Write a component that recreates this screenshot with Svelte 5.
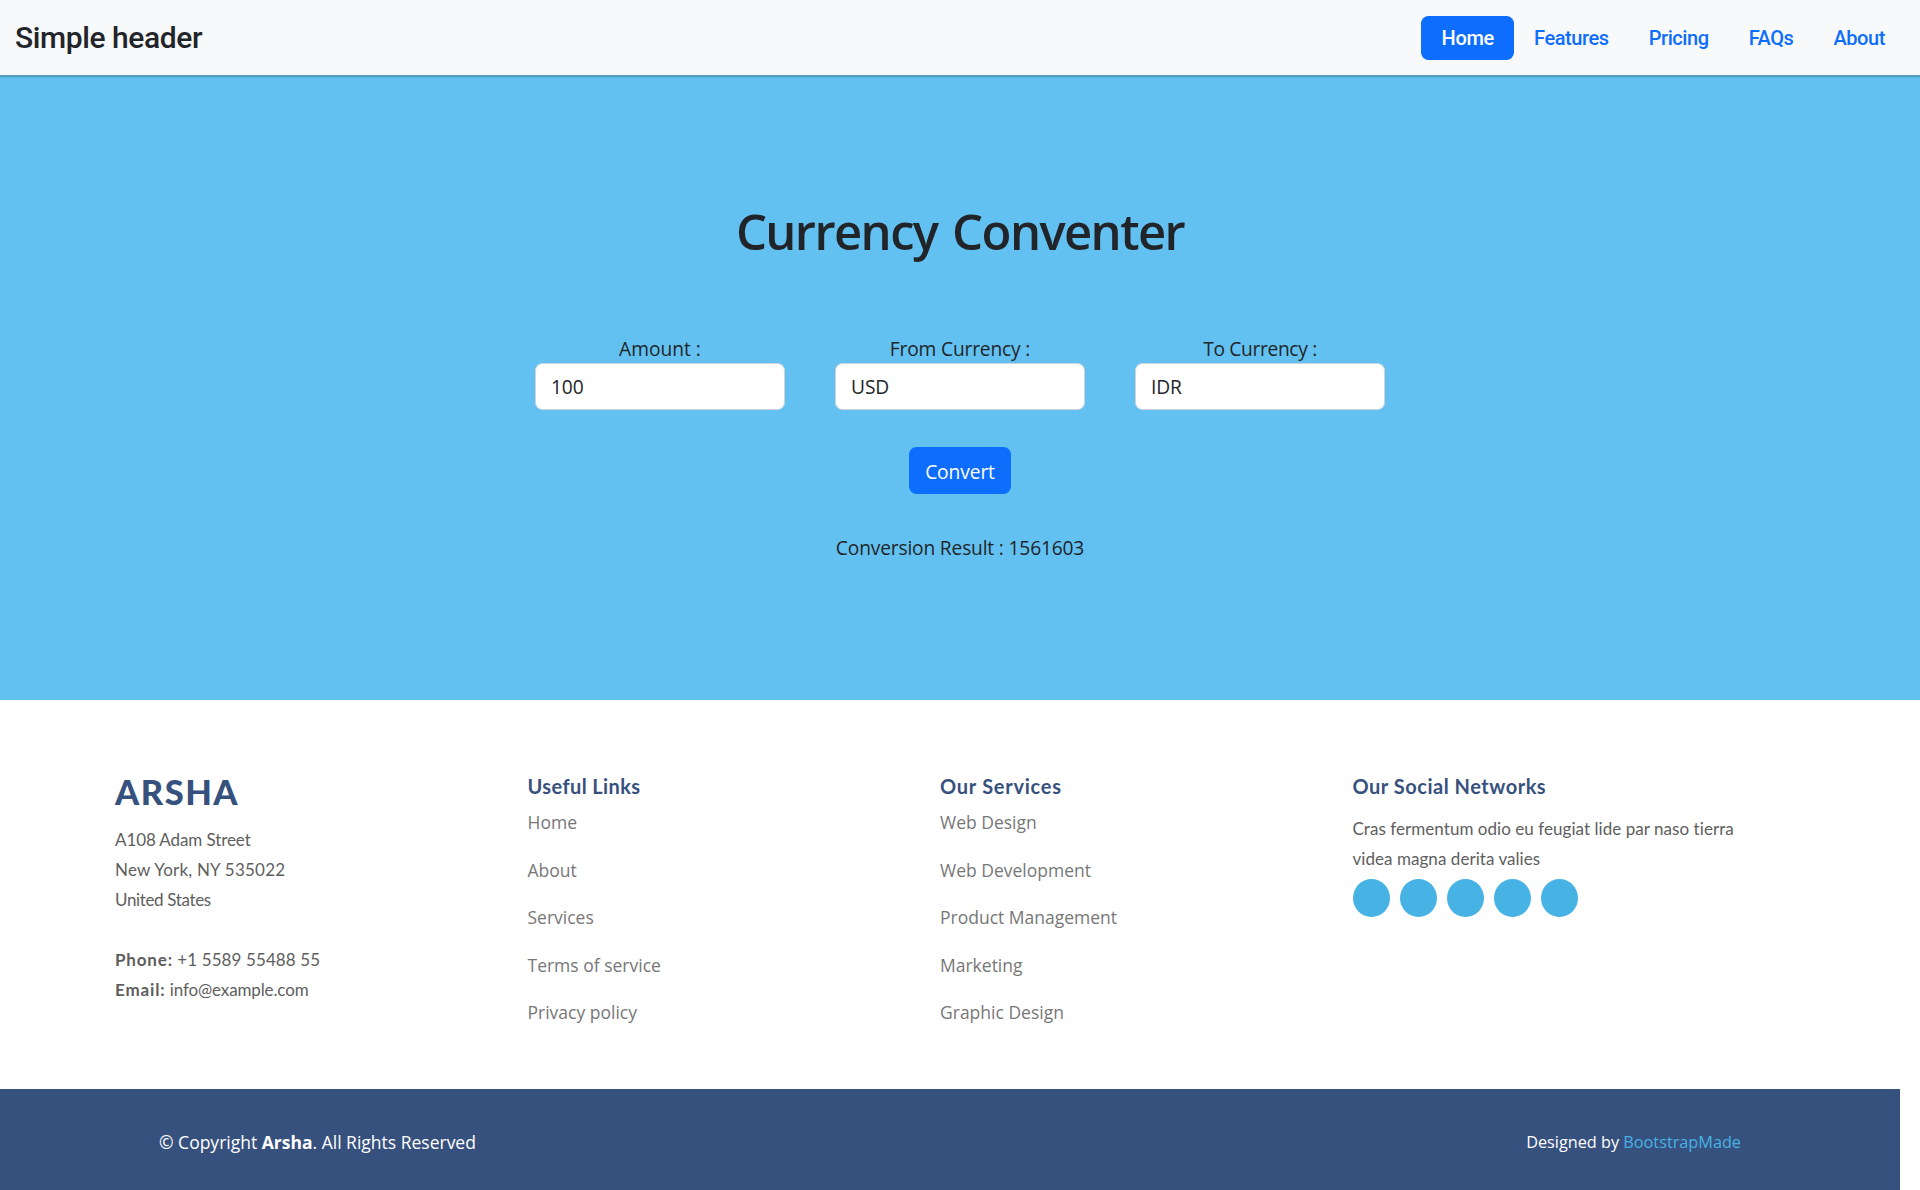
<script>
  const nav = ['Home', 'Features', 'Pricing', 'FAQs', 'About'];
  const usefulLinks = ['Home', 'About', 'Services', 'Terms of service', 'Privacy policy'];
  const services = ['Web Design', 'Web Development', 'Product Management', 'Marketing', 'Graphic Design'];
  const socials = ['Twitter', 'Facebook', 'Instagram', 'Skype', 'LinkedIn'];

  let amount = $state('100');
  let from = $state('USD');
  let to = $state('IDR');
  let result = $state('1561603');
</script>

<header class="topbar">
  <span class="brand">Simple header</span>
  <nav>
    {#each nav as item, i}
      <a href="#top" class:active={i === 0}>{item}</a>
    {/each}
  </nav>
</header>

<main class="hero">
  <h1>Currency Conventer</h1>
  <div class="fields">
    <label><span class="amount">Amount :</span><input bind:value={amount} /></label>
    <label><span>From Currency :</span><input bind:value={from} /></label>
    <label><span class="to">To Currency :</span><input bind:value={to} /></label>
  </div>
  <button type="button">Convert</button>
  <p class="result">Conversion Result : {result}</p>
</main>

<footer>
  <div class="columns">
    <section>
      <h3>ARSHA</h3>
      <address>
        <div class="street">A108 Adam Street</div>
        <div class="city">New York, NY 535022</div>
        <div class="country">United States</div>
        <br />
        <div><strong>Phone:</strong> <span class="phone">+1 5589 55488 55</span></div>
        <div><strong>Email:</strong> <span class="mail">info@example.com</span></div>
      </address>
    </section>
    <section>
      <h4 class="useful">Useful Links</h4>
      <ul>
        {#each usefulLinks as link}<li><a href="#top">{link}</a></li>{/each}
      </ul>
    </section>
    <section>
      <h4 class="services">Our Services</h4>
      <ul>
        {#each services as link}<li><a href="#top">{link}</a></li>{/each}
      </ul>
    </section>
    <section>
      <h4>Our Social Networks</h4>
      <p class="about">Cras fermentum odio eu feugiat lide par naso tierra<br />videa magna derita valies</p>
      <div class="socials">
        {#each socials as name}<a href="#top" aria-label={name}></a>{/each}
      </div>
    </section>
  </div>
  <div class="bottom">
    <div class="copyright">© Copyright <strong>Arsha</strong>. All Rights Reserved</div>
    <div class="credits">Designed by <a href="#top">BootstrapMade</a></div>
  </div>
</footer>

<style>
  :global(body) {
    margin: 0;
    background: #fff;
    color: #212529;
    font-family: 'Open Sans', sans-serif;
    overflow: hidden;
  }
  h1, h3, h4, p, ul { margin: 0; padding: 0; }
  a { text-decoration: none; }
  .topbar {
    position: relative;
    box-sizing: border-box;
    height: 75px;
    padding: 1px 15px 0;
    display: flex;
    align-items: center;
    justify-content: space-between;
    background: #f8f9fa;
    box-shadow: 0 2px 0 #529fc4, 0 3px 0 #5bb3df;
    font-family: Roboto, sans-serif;
    font-weight: 500;
  }
  .brand { font-size: 30px; letter-spacing: -0.41px; padding-bottom: 2px; }
  nav { display: flex; }
  nav a {
    height: 44px;
    line-height: 44px;
    padding: 0 20px;
    border-radius: 7.5px;
    color: #0d6efd;
    font-size: 20px;
    letter-spacing: -0.42px;
  }
  nav a.active { background: #0d6efd; color: #fff; padding: 0 20.2px 0 20.6px; letter-spacing: -0.36px; }

  .hero {
    box-sizing: border-box;
    height: 625px;
    padding-top: 126px;
    display: flex;
    flex-direction: column;
    align-items: center;
    background: #62c1f0;
    font-size: 19.2px;
    letter-spacing: -0.17px;
  }
  h1 { font-size: 49px; font-weight: 600; line-height: 60px; letter-spacing: -1.6px; word-spacing: 3.5px; }
  .fields { display: flex; gap: 50px; margin-top: 74px; }
  label { display: flex; flex-direction: column; width: 250px; text-align: center; line-height: 28px; }
  .amount { letter-spacing: 0; }
  .to { letter-spacing: -0.33px; }
  input {
    box-sizing: border-box;
    width: 250px;
    height: 47px;
    padding: 0 15px;
    border: 1px solid #ced4da;
    border-radius: 7.5px;
    background: #fff;
    color: #212529;
    font: inherit;
    letter-spacing: -0.1px;
  }
  button {
    width: 102px;
    height: 47px;
    margin-top: 37px;
    padding: 2px 0 0;
    border: 0;
    border-radius: 7.5px;
    background: #0d6efd;
    color: #fff;
    font: inherit;
    letter-spacing: -0.1px;
  }
  .result { margin-top: 39px; line-height: 30px; }

  .columns {
    box-sizing: border-box;
    height: 389px;
    padding: 73px 0 0 115px;
    display: grid;
    grid-template-columns: repeat(4, 412.5px);
  }
  h3, h4 { font-family: Lato, sans-serif; font-weight: 700; color: #37517e; }
  h3 { font-size: 34.5px; font-weight: 900; line-height: 36px; letter-spacing: 1.5px; padding-top: 1px; margin-bottom: 15px; }
  h4 { font-size: 20px; line-height: 24px; letter-spacing: 0.52px; padding-top: 1px; }
  .useful { letter-spacing: 0.4px; }
  .services { letter-spacing: 0.74px; }
  address, .about {
    font-family: Lato, sans-serif;
    font-style: normal;
    font-size: 17px;
    line-height: 30px;
    color: #5e5e5e;
  }
  address strong { letter-spacing: 0.84px; }
  .street { letter-spacing: -0.1px; }
  .city { letter-spacing: 0.22px; }
  .country { letter-spacing: -0.35px; }
  .phone { letter-spacing: 0.1px; }
  .mail { letter-spacing: -0.13px; }
  ul { list-style: none; margin-top: 1px; }
  li { height: 47.5px; line-height: 47.5px; }
  li a { color: #777; font-size: 17.5px; }
  .about { margin-top: 16px; white-space: nowrap; letter-spacing: 0.05px; }
  .socials { display: flex; gap: 10px; margin-top: 5px; }
  .socials a { width: 37px; height: 38px; border-radius: 50%; background: #47b2e4; }

  .bottom {
    box-sizing: border-box;
    width: 1900px;
    height: 101px;
    padding: 4px 159px 0 159px;
    display: flex;
    align-items: center;
    justify-content: space-between;
    background: #37517e;
    color: #fff;
  }
  .copyright { font-size: 17.5px; }
  .credits { font-size: 16.25px; }
  .credits a { color: #47b2e4; }
</style>
